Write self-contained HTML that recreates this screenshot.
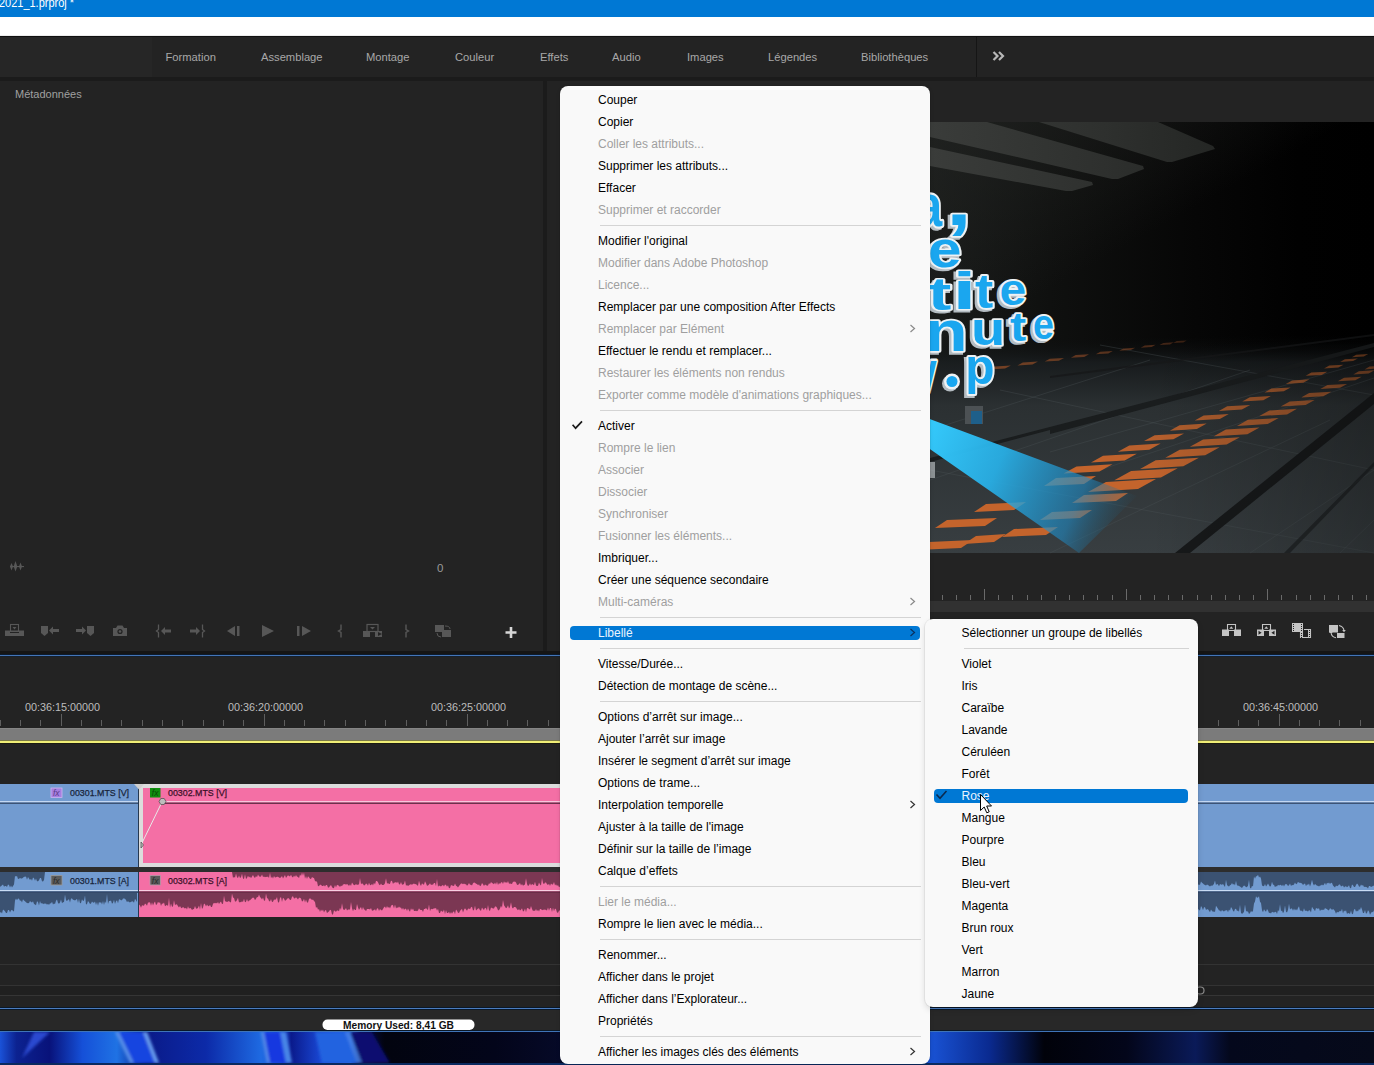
<!DOCTYPE html>
<html><head><meta charset="utf-8"><title>Premiere Pro</title>
<style>
html,body{margin:0;padding:0;}
body{width:1374px;height:1065px;overflow:hidden;position:relative;background:#232323;font-family:'Liberation Sans', sans-serif;}
svg{position:absolute;left:0;top:0;}
svg text{font-family:'Liberation Sans', sans-serif;}
</style></head><body>
<div style="position:absolute;left:0px;top:0px;width:1374px;height:17px;background:#0078d4;"></div>
<div style="position:absolute;left:0px;top:17px;width:1374px;height:19px;background:#ffffff;"></div>
<div style="position:absolute;left:0px;top:35px;width:1374px;height:1px;background:#ececec;"></div>
<div style="position:absolute;left:0px;top:36px;width:1374px;height:1px;background:#101010;"></div>
<div style="position:absolute;left:0px;top:37px;width:1374px;height:40px;background:#232323;"></div>
<div style="position:absolute;left:0px;top:37px;width:152px;height:40px;background:#262626;"></div>
<div style="position:absolute;left:976px;top:37px;width:1px;height:40px;background:#151515;"></div>
<div style="position:absolute;left:0px;top:77px;width:1374px;height:4px;background:#1b1b1b;"></div>
<div style="position:absolute;left:0px;top:81px;width:543px;height:570px;background:#232323;"></div>
<div style="position:absolute;left:543px;top:81px;width:4px;height:570px;background:#1b1b1b;"></div>
<div style="position:absolute;left:547px;top:81px;width:827px;height:570px;background:#232323;"></div>
<div style="position:absolute;left:0px;top:651px;width:1374px;height:3px;background:#151515;"></div>
<div style="position:absolute;left:0px;top:654px;width:1374px;height:1px;background:#0c1a2c;"></div>
<div style="position:absolute;left:0px;top:655px;width:1374px;height:1px;background:#4375b8;"></div>
<div style="position:absolute;left:0px;top:656px;width:1374px;height:1px;background:#16202c;"></div>
<div style="position:absolute;left:0px;top:657px;width:1374px;height:352px;background:#232323;"></div>
<div style="position:absolute;left:0px;top:1007px;width:1374px;height:1px;background:#0a1828;"></div>
<div style="position:absolute;left:0px;top:1008px;width:1374px;height:1px;background:#4a7cc0;"></div>
<div style="position:absolute;left:0px;top:1009px;width:1374px;height:1px;background:#0a1828;"></div>
<div style="position:absolute;left:0px;top:1010px;width:1374px;height:20px;background:#282828;"></div>
<div style="position:absolute;left:0px;top:1030px;width:1374px;height:1px;background:#0a1828;"></div>
<div style="position:absolute;left:0px;top:1031px;width:1374px;height:1px;background:#3f74b8;"></div>
<svg width="1374" height="33" viewBox="0 1032 1374 33" style="position:absolute;left:0;top:1032px">
<defs>
<linearGradient id="wpbase" x1="0" y1="0" x2="1374" y2="0" gradientUnits="userSpaceOnUse">
<stop offset="0" stop-color="#1a52d8"/><stop offset="0.012" stop-color="#0c2290"/><stop offset="0.036" stop-color="#08127a"/>
<stop offset="0.06" stop-color="#1550d8"/><stop offset="0.085" stop-color="#1f72e4"/>
<stop offset="0.106" stop-color="#0a1a88"/><stop offset="0.15" stop-color="#0c2aa8"/><stop offset="0.19" stop-color="#1e6ae2"/>
<stop offset="0.205" stop-color="#1a50d8"/><stop offset="0.212" stop-color="#0a1a8c"/><stop offset="0.235" stop-color="#1a4ad8"/>
<stop offset="0.255" stop-color="#2262e0"/><stop offset="0.262" stop-color="#060c50"/><stop offset="0.28" stop-color="#02040f"/>
<stop offset="0.36" stop-color="#03051a"/><stop offset="0.41" stop-color="#060a28"/><stop offset="0.68" stop-color="#1850d0"/><stop offset="0.72" stop-color="#0a2a90"/>
<stop offset="0.76" stop-color="#01020a"/><stop offset="0.82" stop-color="#03061a"/><stop offset="0.87" stop-color="#0a1a58"/>
<stop offset="0.895" stop-color="#04081c"/><stop offset="1" stop-color="#060a1a"/>
</linearGradient><filter id="wpblur" x="-5%" y="-50%" width="110%" height="200%"><feGaussianBlur stdDeviation="1.6"/></filter></defs>
<rect x="0" y="1032" width="1374" height="33" fill="url(#wpbase)"/>
<g filter="url(#wpblur)">
<polygon points="34,1032 50,1032 22,1058" fill="#2a4ad0"/>
<polygon points="115,1032 119,1032 134,1063 130,1063" fill="#5a92ea"/>
<polygon points="119,1032 143,1032 155,1063 134,1063" fill="#1444e0"/>
<polygon points="143,1032 147,1032 159,1063 155,1063" fill="#6aa0f0"/>
<polygon points="261,1032 264,1032 270,1063 267,1063" fill="#5a8ee8"/>
<polygon points="264,1032 286,1032 290,1063 270,1063" fill="#1238e0"/>
<polygon points="280,1032 286,1032 292,1063 286,1063" fill="#4a86e6"/>
<polygon points="315,1032 345,1032 357,1063 322,1063" fill="#2464e0"/>
<polygon points="345,1032 350,1032 362,1063 357,1063" fill="#4a86e8" opacity="0.8"/>
<polygon points="350,1032 372,1032 390,1063 362,1063" fill="#071070"/>
</g>
<rect x="0" y="1063" width="1374" height="2" fill="#0a2a60"/>
</svg>
<svg width="1374" height="1065" viewBox="0 0 1374 1065" style="position:absolute;left:0;top:0">
<defs>
<linearGradient id="bgwall" x1="930" y1="0" x2="1374" y2="0" gradientUnits="userSpaceOnUse">
  <stop offset="0" stop-color="#191b1a"/><stop offset="0.27" stop-color="#0f100f"/><stop offset="0.6" stop-color="#060606"/><stop offset="0.83" stop-color="#010101"/><stop offset="1" stop-color="#000"/>
</linearGradient>
<linearGradient id="panelg" x1="930" y1="0" x2="1220" y2="0" gradientUnits="userSpaceOnUse">
  <stop offset="0" stop-color="#3a3c3a"/><stop offset="0.6" stop-color="#2e302e"/><stop offset="1" stop-color="#242624"/>
</linearGradient>
<linearGradient id="floorg" x1="0" y1="336" x2="0" y2="553" gradientUnits="userSpaceOnUse">
  <stop offset="0" stop-color="#0a0c0c" stop-opacity="0"/><stop offset="0.12" stop-color="#1a1e20" stop-opacity="0.85"/><stop offset="0.32" stop-color="#2b3032"/><stop offset="1" stop-color="#383e41"/>
</linearGradient>
<linearGradient id="beamg" x1="930" y1="430" x2="1130" y2="520" gradientUnits="userSpaceOnUse">
  <stop offset="0" stop-color="#34c8fa" stop-opacity="1"/><stop offset="0.35" stop-color="#28b2ea" stop-opacity="0.92"/><stop offset="0.75" stop-color="#208ac4" stop-opacity="0.6"/><stop offset="1" stop-color="#1a5c7c" stop-opacity="0"/>
</linearGradient>
<linearGradient id="horizon" x1="0" y1="330" x2="0" y2="368" gradientUnits="userSpaceOnUse">
  <stop offset="0" stop-color="#000" stop-opacity="0.9"/><stop offset="1" stop-color="#000" stop-opacity="0"/>
</linearGradient>
<linearGradient id="ceilglow" x1="930" y1="122" x2="1030" y2="300" gradientUnits="userSpaceOnUse">
  <stop offset="0" stop-color="#222422" stop-opacity="0.7"/><stop offset="1" stop-color="#222422" stop-opacity="0"/>
</linearGradient>
<linearGradient id="rightdark" x1="1150" y1="0" x2="1374" y2="0" gradientUnits="userSpaceOnUse">
  <stop offset="0" stop-color="#000" stop-opacity="0"/><stop offset="1" stop-color="#000" stop-opacity="0.25"/>
</linearGradient>
</defs>
<rect x="700" y="122" width="674" height="431" fill="url(#bgwall)"/>
<rect x="700" y="122" width="674" height="215" fill="url(#ceilglow)"/>
<polygon points="1039,122 1158,122 1213,146 1215,149 1172,162 1167,162" fill="url(#panelg)"/>
<polygon points="800,122 987,122 1143,166 1144,169 1118,179 1112,179 930,137 800,108" fill="url(#panelg)"/>
<polygon points="800,118 930,147 1092,182 1093,185 1072,191 1066,191 930,166 800,140" fill="url(#panelg)"/>
<polygon points="700,336 1374,336 1374,553 700,553" fill="url(#floorg)"/>
<line x1="1374" y1="360" x2="1050" y2="452" stroke="#4b5356" stroke-width="1" opacity="0.35"/>
<line x1="1374" y1="378" x2="1100" y2="470" stroke="#4b5356" stroke-width="1" opacity="0.35"/>
<line x1="1330" y1="420" x2="1050" y2="553" stroke="#4b5356" stroke-width="1" opacity="0.35"/>
<line x1="1374" y1="470" x2="1250" y2="553" stroke="#4b5356" stroke-width="1" opacity="0.35"/>
<line x1="1100" y1="345" x2="1374" y2="395" stroke="#4b5356" stroke-width="1" opacity="0.35"/>
<line x1="1000" y1="390" x2="1374" y2="470" stroke="#4b5356" stroke-width="1" opacity="0.35"/>
<line x1="930" y1="470" x2="1374" y2="553" stroke="#4b5356" stroke-width="1" opacity="0.35"/>
<line x1="1150" y1="360" x2="930" y2="430" stroke="#4b5356" stroke-width="1" opacity="0.35"/>
<line x1="1250" y1="370" x2="930" y2="480" stroke="#4b5356" stroke-width="1" opacity="0.35"/>
<line x1="1374" y1="520" x2="1340" y2="553" stroke="#4b5356" stroke-width="1" opacity="0.35"/>
<polygon points="1374,393 1374,404 1190,553 1175,553" fill="#17191a"/>
<polygon points="1374,343 1374,347 1050,434 1050,430 930,462 930,458" fill="#1a1d1e"/>
<polygon points="1374,334 1374,336 1050,378 1050,376" fill="#161819" opacity="0.8"/>
<polygon points="1374,462 1374,466 1290,553 1284,553" fill="#1b1e20" opacity="0.7"/>
<polygon points="1356.2,354.8 1368.2,354.1 1363.8,356.5 1351.8,357.2" fill="#c4642c" opacity="0.55"/>
<polygon points="1344.8,359.3 1357.8,358.5 1353.1,361.1 1340.2,361.9" fill="#c4642c" opacity="0.58"/>
<polygon points="1329.2,365.6 1343.5,364.7 1338.4,367.6 1324.1,368.4" fill="#c4642c" opacity="0.62"/>
<polygon points="1311.4,372.6 1327.3,371.7 1321.6,374.9 1305.7,375.8" fill="#c4642c" opacity="0.65"/>
<polygon points="1292.1,380.4 1309.6,379.3 1303.3,382.8 1285.8,383.9" fill="#c4642c" opacity="0.69"/>
<polygon points="1271.4,388.6 1290.7,387.4 1283.8,391.3 1264.5,392.5" fill="#c4642c" opacity="0.72"/>
<polygon points="1249.8,397.3 1270.9,396.0 1263.3,400.2 1242.2,401.5" fill="#c4642c" opacity="0.76"/>
<polygon points="1227.2,406.3 1250.2,404.9 1241.9,409.5 1218.9,410.9" fill="#c4642c" opacity="0.79"/>
<polygon points="1203.7,415.6 1228.8,414.1 1219.8,419.1 1194.7,420.6" fill="#c4642c" opacity="0.83"/>
<polygon points="1179.5,425.3 1206.7,423.6 1196.9,429.1 1169.8,430.7" fill="#c4642c" opacity="0.86"/>
<polygon points="1154.7,435.2 1184.0,433.4 1173.4,439.3 1144.1,441.1" fill="#c4642c" opacity="0.90"/>
<polygon points="1129.2,445.4 1160.7,443.5 1149.3,449.8 1117.9,451.7" fill="#c4642c" opacity="0.93"/>
<polygon points="1103.1,455.8 1136.8,453.8 1124.7,460.5 1091.0,462.5" fill="#c4642c" opacity="0.97"/>
<polygon points="1076.5,466.4 1112.5,464.2 1099.5,471.4 1063.5,473.6" fill="#c4642c" opacity="1.00"/>
<polygon points="1369.5,366.6 1383.5,365.8 1378.5,368.6 1364.5,369.4" fill="#c4642c" opacity="0.55"/>
<polygon points="1358.8,371.3 1374.3,370.3 1368.7,373.4 1353.3,374.4" fill="#c4642c" opacity="0.58"/>
<polygon points="1344.1,377.7 1361.6,376.7 1355.3,380.2 1337.8,381.2" fill="#c4642c" opacity="0.62"/>
<polygon points="1327.4,385.1 1347.1,383.9 1340.0,387.8 1320.3,389.0" fill="#c4642c" opacity="0.65"/>
<polygon points="1309.1,393.0 1331.4,391.7 1323.4,396.2 1301.1,397.5" fill="#c4642c" opacity="0.69"/>
<polygon points="1289.7,401.6 1314.6,400.1 1305.6,405.0 1280.7,406.5" fill="#c4642c" opacity="0.72"/>
<polygon points="1269.3,410.5 1297.0,408.8 1287.0,414.4 1259.3,416.0" fill="#c4642c" opacity="0.76"/>
<polygon points="1248.0,419.8 1278.6,418.0 1267.6,424.1 1237.0,426.0" fill="#c4642c" opacity="0.79"/>
<polygon points="1225.9,429.5 1259.5,427.5 1247.4,434.2 1213.8,436.2" fill="#c4642c" opacity="0.83"/>
<polygon points="1203.1,439.5 1239.8,437.3 1226.6,444.6 1189.9,446.8" fill="#c4642c" opacity="0.86"/>
<polygon points="1179.7,449.7 1219.6,447.3 1205.2,455.3 1165.3,457.7" fill="#c4642c" opacity="0.90"/>
<polygon points="1155.7,460.3 1198.9,457.7 1183.3,466.3 1140.1,468.9" fill="#c4642c" opacity="0.93"/>
<polygon points="1131.1,471.0 1177.7,468.2 1160.9,477.5 1114.3,480.3" fill="#c4642c" opacity="0.97"/>
<polygon points="1106.0,482.0 1156.0,479.0 1138.0,489.0 1088.0,492.0" fill="#c4642c" opacity="1.00"/>
<polygon points="1056.0,478.0 1096.0,476.0 1084.0,484.0 1044.0,486.0" fill="#c4642c"/>
<polygon points="1084.0,495.0 1128.0,493.0 1116.0,501.0 1072.0,503.0" fill="#c4642c"/>
<polygon points="1052.0,512.0 1092.0,510.0 1080.0,518.0 1040.0,520.0" fill="#c4642c"/>
<polygon points="947.0,520.0 997.0,518.0 985.0,526.0 935.0,528.0" fill="#c4642c"/>
<polygon points="929.0,542.0 973.0,540.0 961.0,548.0 917.0,550.0" fill="#c4642c"/>
<polygon points="986.0,504.0 1026.0,502.0 1014.0,510.0 974.0,512.0" fill="#c4642c"/>
<polygon points="1014.0,529.0 1058.0,527.0 1046.0,535.0 1002.0,537.0" fill="#c4642c"/>
<polygon points="976.0,536.0 1006.0,534.0 994.0,542.0 964.0,544.0" fill="#c4642c"/>
<polygon points="1176.8,341.0 1186.8,340.4 1183.2,342.4 1173.2,343.0" fill="#9a5028" opacity="0.35"/>
<polygon points="1163.3,342.9 1173.7,342.3 1170.0,344.4 1159.5,345.0" fill="#9a5028" opacity="0.39"/>
<polygon points="1144.6,345.5 1155.7,344.8 1151.7,347.0 1140.7,347.7" fill="#9a5028" opacity="0.44"/>
<polygon points="1123.4,348.5 1135.2,347.7 1130.9,350.1 1119.2,350.8" fill="#9a5028" opacity="0.48"/>
<polygon points="1100.3,351.7 1112.8,350.9 1108.3,353.4 1095.8,354.2" fill="#9a5028" opacity="0.52"/>
<polygon points="1075.7,355.1 1089.0,354.3 1084.2,357.0 1070.9,357.8" fill="#9a5028" opacity="0.57"/>
<polygon points="1049.8,358.7 1064.0,357.9 1058.9,360.7 1044.7,361.6" fill="#9a5028" opacity="0.61"/>
<polygon points="1022.8,362.5 1037.9,361.6 1032.5,364.6 1017.4,365.5" fill="#9a5028" opacity="0.66"/>
<polygon points="994.9,366.4 1010.9,365.4 1005.1,368.6 989.1,369.6" fill="#9a5028" opacity="0.70"/>

<rect x="1150" y="330" width="224" height="223" fill="url(#rightdark)"/>
<polygon points="838,385 1137,496 1079,553" fill="url(#beamg)"/>
<rect x="965" y="406" width="18" height="18" fill="#4c5154"/><rect x="971" y="411" width="11" height="13" fill="#1e5f8a"/>
<rect x="930" y="462" width="5" height="16" fill="#c8cdd0" opacity="0.6"/>
<g transform="translate(913.58,228.40) scale(0.4717,0.6000)"><text x="0" y="0" font-size="100" font-weight="bold" fill="#b4bcc2" stroke="#b4bcc2" stroke-width="7.46" font-family="Liberation Sans">a</text></g>
<g transform="translate(916.08,226.40) scale(0.4717,0.6000)"><text x="0" y="0" font-size="100" font-weight="bold" fill="#1aa6ef" stroke="#eef2f4" stroke-width="7.46" paint-order="stroke" stroke-linejoin="round" font-family="Liberation Sans">a</text></g>
<g transform="translate(943.50,226.50) scale(0.9286,0.7000)"><text x="0" y="0" font-size="100" font-weight="bold" fill="#b4bcc2" stroke="#b4bcc2" stroke-width="4.91" font-family="Liberation Sans">,</text></g>
<g transform="translate(946.00,224.50) scale(0.9286,0.7000)"><text x="0" y="0" font-size="100" font-weight="bold" fill="#1aa6ef" stroke="#eef2f4" stroke-width="4.91" paint-order="stroke" stroke-linejoin="round" font-family="Liberation Sans">,</text></g>
<g transform="translate(925.58,269.49) scale(0.6042,0.5091)"><text x="0" y="0" font-size="100" font-weight="bold" fill="#b4bcc2" stroke="#b4bcc2" stroke-width="7.19" font-family="Liberation Sans">e</text></g>
<g transform="translate(928.08,267.49) scale(0.6042,0.5091)"><text x="0" y="0" font-size="100" font-weight="bold" fill="#1aa6ef" stroke="#eef2f4" stroke-width="7.19" paint-order="stroke" stroke-linejoin="round" font-family="Liberation Sans">e</text></g>
<g transform="translate(925.29,311.53) scale(0.7097,0.4697)"><text x="0" y="0" font-size="100" font-weight="bold" fill="#b4bcc2" stroke="#b4bcc2" stroke-width="6.78" font-family="Liberation Sans">t</text></g>
<g transform="translate(927.79,309.53) scale(0.7097,0.4697)"><text x="0" y="0" font-size="100" font-weight="bold" fill="#1aa6ef" stroke="#eef2f4" stroke-width="6.78" paint-order="stroke" stroke-linejoin="round" font-family="Liberation Sans">t</text></g>
<g transform="translate(950.00,311.00) scale(0.8571,0.5139)"><text x="0" y="0" font-size="100" font-weight="bold" fill="#b4bcc2" stroke="#b4bcc2" stroke-width="5.84" font-family="Liberation Sans">i</text></g>
<g transform="translate(952.50,309.00) scale(0.8571,0.5139)"><text x="0" y="0" font-size="100" font-weight="bold" fill="#1aa6ef" stroke="#eef2f4" stroke-width="5.84" paint-order="stroke" stroke-linejoin="round" font-family="Liberation Sans">i</text></g>
<g transform="translate(972.45,309.52) scale(0.5484,0.4848)"><text x="0" y="0" font-size="100" font-weight="bold" fill="#b4bcc2" stroke="#b4bcc2" stroke-width="7.74" font-family="Liberation Sans">t</text></g>
<g transform="translate(974.95,307.52) scale(0.5484,0.4848)"><text x="0" y="0" font-size="100" font-weight="bold" fill="#1aa6ef" stroke="#eef2f4" stroke-width="7.74" paint-order="stroke" stroke-linejoin="round" font-family="Liberation Sans">t</text></g>
<g transform="translate(997.08,306.56) scale(0.4792,0.4364)"><text x="0" y="0" font-size="100" font-weight="bold" fill="#b4bcc2" stroke="#b4bcc2" stroke-width="8.74" font-family="Liberation Sans">e</text></g>
<g transform="translate(999.58,304.56) scale(0.4792,0.4364)"><text x="0" y="0" font-size="100" font-weight="bold" fill="#1aa6ef" stroke="#eef2f4" stroke-width="8.74" paint-order="stroke" stroke-linejoin="round" font-family="Liberation Sans">e</text></g>
<g transform="translate(922.04,353.00) scale(0.7083,0.5741)"><text x="0" y="0" font-size="100" font-weight="bold" fill="#b4bcc2" stroke="#b4bcc2" stroke-width="6.24" font-family="Liberation Sans">n</text></g>
<g transform="translate(924.54,351.00) scale(0.7083,0.5741)"><text x="0" y="0" font-size="100" font-weight="bold" fill="#1aa6ef" stroke="#eef2f4" stroke-width="6.24" paint-order="stroke" stroke-linejoin="round" font-family="Liberation Sans">n</text></g>
<g transform="translate(968.62,346.54) scale(0.5625,0.4630)"><text x="0" y="0" font-size="100" font-weight="bold" fill="#b4bcc2" stroke="#b4bcc2" stroke-width="7.80" font-family="Liberation Sans">u</text></g>
<g transform="translate(971.12,344.54) scale(0.5625,0.4630)"><text x="0" y="0" font-size="100" font-weight="bold" fill="#1aa6ef" stroke="#eef2f4" stroke-width="7.80" paint-order="stroke" stroke-linejoin="round" font-family="Liberation Sans">u</text></g>
<g transform="translate(1007.52,342.59) scale(0.4839,0.4091)"><text x="0" y="0" font-size="100" font-weight="bold" fill="#b4bcc2" stroke="#b4bcc2" stroke-width="8.96" font-family="Liberation Sans">t</text></g>
<g transform="translate(1010.02,340.59) scale(0.4839,0.4091)"><text x="0" y="0" font-size="100" font-weight="bold" fill="#1aa6ef" stroke="#eef2f4" stroke-width="8.96" paint-order="stroke" stroke-linejoin="round" font-family="Liberation Sans">t</text></g>
<g transform="translate(1030.50,340.58) scale(0.3750,0.4182)"><text x="0" y="0" font-size="100" font-weight="bold" fill="#b4bcc2" stroke="#b4bcc2" stroke-width="10.09" font-family="Liberation Sans">e</text></g>
<g transform="translate(1033.00,338.58) scale(0.3750,0.4182)"><text x="0" y="0" font-size="100" font-weight="bold" fill="#1aa6ef" stroke="#eef2f4" stroke-width="10.09" paint-order="stroke" stroke-linejoin="round" font-family="Liberation Sans">e</text></g>
<g transform="translate(912.61,394.00) scale(0.3889,0.5849)"><text x="0" y="0" font-size="100" font-weight="bold" fill="#b4bcc2" stroke="#b4bcc2" stroke-width="8.22" font-family="Liberation Sans">v</text></g>
<g transform="translate(915.11,392.00) scale(0.3889,0.5849)"><text x="0" y="0" font-size="100" font-weight="bold" fill="#1aa6ef" stroke="#eef2f4" stroke-width="8.22" paint-order="stroke" stroke-linejoin="round" font-family="Liberation Sans">v</text></g>
<circle cx="950" cy="383.5" r="8" fill="#b4bcc2"/><circle cx="952" cy="381.5" r="8" fill="#eef2f4"/><circle cx="952" cy="381.5" r="5.5" fill="#1aa6ef"/>
<g transform="translate(962.64,385.64) scale(0.4800,0.4933)"><text x="0" y="0" font-size="100" font-weight="bold" fill="#b4bcc2" stroke="#b4bcc2" stroke-width="8.22" font-family="Liberation Sans">p</text></g>
<g transform="translate(965.14,383.64) scale(0.4800,0.4933)"><text x="0" y="0" font-size="100" font-weight="bold" fill="#1aa6ef" stroke="#eef2f4" stroke-width="8.22" paint-order="stroke" stroke-linejoin="round" font-family="Liberation Sans">p</text></g>
</svg>
<svg width="1374" height="1065" viewBox="0 0 1374 1065">
<text x="-1" y="6.5" font-size="12" fill="#ffffff" font-weight="normal" textLength="75" lengthAdjust="spacingAndGlyphs">2021_1.prproj *</text>
<text x="165.5" y="61" font-size="11.2" fill="#a8a8a8" font-weight="normal" >Formation</text>
<text x="261" y="61" font-size="11.2" fill="#a8a8a8" font-weight="normal" >Assemblage</text>
<text x="366" y="61" font-size="11.2" fill="#a8a8a8" font-weight="normal" >Montage</text>
<text x="455" y="61" font-size="11.2" fill="#a8a8a8" font-weight="normal" >Couleur</text>
<text x="540" y="61" font-size="11.2" fill="#a8a8a8" font-weight="normal" >Effets</text>
<text x="612" y="61" font-size="11.2" fill="#a8a8a8" font-weight="normal" >Audio</text>
<text x="687" y="61" font-size="11.2" fill="#a8a8a8" font-weight="normal" >Images</text>
<text x="768" y="61" font-size="11.2" fill="#a8a8a8" font-weight="normal" >Légendes</text>
<text x="861" y="61" font-size="11.2" fill="#a8a8a8" font-weight="normal" >Bibliothèques</text>
<path d="M993.5 52 L997.5 56 L993.5 60 M999 52 L1003 56 L999 60" stroke="#b8b8b8" stroke-width="2.2" fill="none"/>
<text x="15" y="98" font-size="11" fill="#a0a0a0" font-weight="normal" >Métadonnées</text>
<text x="437" y="572" font-size="11.5" fill="#9a9a9a" font-weight="normal" >0</text>
<g fill="#575757"><rect x="10" y="566" width="14" height="1.1"/><polygon points="11.5,563 13,566.5 11.5,570.5 10,566.5"/><polygon points="15.5,561 17.3,566.5 15.5,571.5 13.7,566.5"/><polygon points="20.5,562.5 22,566.5 20.5,570.5 19,566.5"/></g>
<g fill="#575757"><rect x="5" y="630.5" width="19" height="5.5"/><rect x="10.5" y="624.5" width="8" height="7" fill="none" stroke="#575757" stroke-width="1.1"/><polygon points="12.5,627 16.5,627 14.5,629.5"/><rect x="10" y="632" width="9" height="1" fill="#232323"/></g>
<g fill="#575757"><path d="M41 626 H48 V633 L44.5 636 L41 633 Z"/><path d="M49 630.5 L53 626.5 V629 H59 V632 H53 V634.5 Z"/></g>
<g fill="#575757"><path d="M76 629 H82 V626.5 L86 630.5 L82 634.5 V632 H76 Z"/><path d="M87 626 H94 V633 L90.5 636 L87 633 Z"/></g>
<g fill="#575757"><path d="M113 628 H116 L117.5 625.5 H122.5 L124 628 H127 V636 H113 Z"/><circle cx="120" cy="631.5" r="2.6" fill="#232323"/><circle cx="120" cy="631.5" r="1.3" fill="#575757"/></g>
<g fill="#575757"><path d="M158.5 624.5 V629.5 L156.5 631 L158.5 632.5 V637.5" stroke="#575757" stroke-width="1.3" fill="none"/><path d="M161 631 L165 627 V629.5 H171 V632.5 H165 V635 Z"/></g>
<g fill="#575757"><path d="M190 629.5 H196 V627 L200 631 L196 635 V632.5 H190 Z"/><path d="M202.5 624.5 V629.5 L204.5 631 L202.5 632.5 V637.5" stroke="#575757" stroke-width="1.3" fill="none"/></g>
<g fill="#575757"><polygon points="227,631 235,626 235,636"/><rect x="237" y="626" width="2.5" height="10"/></g>
<g fill="#575757"><polygon points="262,625 274,631 262,637"/></g>
<g fill="#575757"><rect x="297" y="626" width="2.5" height="10"/><polygon points="302,626 311,631 302,636"/></g>
<path d="M341 624.5 V629.5 L338.5 631 L341 632.5 V637.5" stroke="#575757" stroke-width="1.4" fill="none"/>
<g fill="#575757"><rect x="363" y="631" width="7" height="6"/><rect x="375" y="631" width="7" height="6"/><rect x="367" y="624.5" width="11" height="7" fill="none" stroke="#575757" stroke-width="1.2"/><polygon points="370,627 375,627 372.5,629.5"/><polygon points="378,632 382,634 378,636" fill="#232323"/></g>
<path d="M406 624.5 V629.5 L408.5 631 L406 632.5 V637.5" stroke="#575757" stroke-width="1.4" fill="none"/>
<g fill="#575757"><rect x="435" y="625" width="9" height="7"/><rect x="442" y="630" width="9" height="7"/><path d="M445 626 Q450 626 450 629 M437 633 Q437 637 441 637" stroke="#575757" stroke-width="1" fill="none"/></g>
<path d="M511 627 V638 M505.5 632.5 H516.5" stroke="#d6d6d6" stroke-width="2.6"/>
<rect x="573" y="595" width="1" height="5" fill="#6a6a6a"/>
<rect x="588" y="595" width="1" height="5" fill="#6a6a6a"/>
<rect x="602" y="595" width="1" height="5" fill="#6a6a6a"/>
<rect x="616" y="595" width="1" height="5" fill="#6a6a6a"/>
<rect x="630" y="595" width="1" height="5" fill="#6a6a6a"/>
<rect x="644" y="595" width="1" height="5" fill="#6a6a6a"/>
<rect x="658" y="595" width="1" height="5" fill="#6a6a6a"/>
<rect x="673" y="595" width="1" height="5" fill="#6a6a6a"/>
<rect x="687" y="595" width="1" height="5" fill="#6a6a6a"/>
<rect x="701" y="589" width="1" height="11" fill="#6a6a6a"/>
<rect x="715" y="595" width="1" height="5" fill="#6a6a6a"/>
<rect x="729" y="595" width="1" height="5" fill="#6a6a6a"/>
<rect x="743" y="595" width="1" height="5" fill="#6a6a6a"/>
<rect x="758" y="595" width="1" height="5" fill="#6a6a6a"/>
<rect x="772" y="595" width="1" height="5" fill="#6a6a6a"/>
<rect x="786" y="595" width="1" height="5" fill="#6a6a6a"/>
<rect x="800" y="595" width="1" height="5" fill="#6a6a6a"/>
<rect x="814" y="595" width="1" height="5" fill="#6a6a6a"/>
<rect x="828" y="595" width="1" height="5" fill="#6a6a6a"/>
<rect x="843" y="589" width="1" height="11" fill="#6a6a6a"/>
<rect x="857" y="595" width="1" height="5" fill="#6a6a6a"/>
<rect x="871" y="595" width="1" height="5" fill="#6a6a6a"/>
<rect x="885" y="595" width="1" height="5" fill="#6a6a6a"/>
<rect x="899" y="595" width="1" height="5" fill="#6a6a6a"/>
<rect x="913" y="595" width="1" height="5" fill="#6a6a6a"/>
<rect x="927" y="595" width="1" height="5" fill="#6a6a6a"/>
<rect x="942" y="595" width="1" height="5" fill="#6a6a6a"/>
<rect x="956" y="595" width="1" height="5" fill="#6a6a6a"/>
<rect x="970" y="595" width="1" height="5" fill="#6a6a6a"/>
<rect x="984" y="589" width="1" height="11" fill="#6a6a6a"/>
<rect x="998" y="595" width="1" height="5" fill="#6a6a6a"/>
<rect x="1012" y="595" width="1" height="5" fill="#6a6a6a"/>
<rect x="1027" y="595" width="1" height="5" fill="#6a6a6a"/>
<rect x="1041" y="595" width="1" height="5" fill="#6a6a6a"/>
<rect x="1055" y="595" width="1" height="5" fill="#6a6a6a"/>
<rect x="1069" y="595" width="1" height="5" fill="#6a6a6a"/>
<rect x="1083" y="595" width="1" height="5" fill="#6a6a6a"/>
<rect x="1097" y="595" width="1" height="5" fill="#6a6a6a"/>
<rect x="1112" y="595" width="1" height="5" fill="#6a6a6a"/>
<rect x="1126" y="589" width="1" height="11" fill="#6a6a6a"/>
<rect x="1140" y="595" width="1" height="5" fill="#6a6a6a"/>
<rect x="1154" y="595" width="1" height="5" fill="#6a6a6a"/>
<rect x="1168" y="595" width="1" height="5" fill="#6a6a6a"/>
<rect x="1182" y="595" width="1" height="5" fill="#6a6a6a"/>
<rect x="1197" y="595" width="1" height="5" fill="#6a6a6a"/>
<rect x="1211" y="595" width="1" height="5" fill="#6a6a6a"/>
<rect x="1225" y="595" width="1" height="5" fill="#6a6a6a"/>
<rect x="1239" y="595" width="1" height="5" fill="#6a6a6a"/>
<rect x="1253" y="595" width="1" height="5" fill="#6a6a6a"/>
<rect x="1267" y="589" width="1" height="11" fill="#6a6a6a"/>
<rect x="1281" y="595" width="1" height="5" fill="#6a6a6a"/>
<rect x="1296" y="595" width="1" height="5" fill="#6a6a6a"/>
<rect x="1310" y="595" width="1" height="5" fill="#6a6a6a"/>
<rect x="1324" y="595" width="1" height="5" fill="#6a6a6a"/>
<rect x="1338" y="595" width="1" height="5" fill="#6a6a6a"/>
<rect x="1352" y="595" width="1" height="5" fill="#6a6a6a"/>
<rect x="1366" y="595" width="1" height="5" fill="#6a6a6a"/>
<rect x="600" y="601" width="774" height="11" fill="#313131"/>
<g fill="#c4c4c4"><rect x="1222" y="629.5" width="7" height="6.5"/><rect x="1234" y="629.5" width="7" height="6.5"/><path d="M1227.5 630.5 V624.5 H1235.5 V630.5 Z" fill="none" stroke="#c4c4c4" stroke-width="1.1"/><polygon points="1229.3,628.8 1233.3,628.8 1231.3,626.2"/></g>
<g fill="#c4c4c4"><rect x="1257" y="629.5" width="7" height="6.5"/><rect x="1269" y="629.5" width="7" height="6.5"/><path d="M1262.5 630.5 V624.5 H1270.5 V630.5 Z" fill="none" stroke="#c4c4c4" stroke-width="1.1"/><polygon points="1264.3,628.8 1268.3,628.8 1266.3,626.2"/><polygon points="1258.5,630.8 1261.6,632.8 1258.5,634.8" fill="#232323"/><polygon points="1274.5,630.8 1271.4,632.8 1274.5,634.8" fill="#232323"/></g>
<g fill="#c4c4c4"><rect x="1292" y="623" width="11" height="9"/><rect x="1293" y="624" width="1" height="1" fill="#232323"/><rect x="1301" y="624" width="1" height="1" fill="#232323"/><rect x="1293" y="626" width="1" height="1" fill="#232323"/><rect x="1301" y="626" width="1" height="1" fill="#232323"/><rect x="1293" y="628" width="1" height="1" fill="#232323"/><rect x="1301" y="628" width="1" height="1" fill="#232323"/><rect x="1293" y="630" width="1" height="1" fill="#232323"/><rect x="1301" y="630" width="1" height="1" fill="#232323"/><path d="M1304 629.5 H1310.5 V637.5 H1300.5 V632.5" fill="none" stroke="#c4c4c4" stroke-width="1.1"/><rect x="1300" y="632" width="3" height="6"/><rect x="1308" y="629" width="3" height="9"/><rect x="1301" y="633" width="1" height="1" fill="#232323"/><rect x="1301" y="635" width="1" height="1" fill="#232323"/><rect x="1301" y="637" width="1" height="1" fill="#232323"/><rect x="1309" y="630" width="1" height="1" fill="#232323"/><rect x="1309" y="632" width="1" height="1" fill="#232323"/><rect x="1309" y="634" width="1" height="1" fill="#232323"/><rect x="1309" y="636" width="1" height="1" fill="#232323"/></g>
<g fill="#c4c4c4"><rect x="1329" y="625" width="9" height="7.5"/><rect x="1337" y="633" width="7.5" height="5"/><path d="M1339 625.5 Q1343.5 626.5 1344 630.5" fill="none" stroke="#c4c4c4" stroke-width="1.1"/><polygon points="1342.2,630 1345.8,630 1344,632.2"/><path d="M1336 637.8 Q1331.5 637 1331 632.5" fill="none" stroke="#c4c4c4" stroke-width="1.1"/><polygon points="1329.2,633 1332.8,633 1331,630.8"/></g>
<text x="62.5" y="711" font-size="10.8" fill="#bdbdbd" text-anchor="middle">00:36:15:00000</text>
<text x="265.5" y="711" font-size="10.8" fill="#bdbdbd" text-anchor="middle">00:36:20:00000</text>
<text x="468.5" y="711" font-size="10.8" fill="#bdbdbd" text-anchor="middle">00:36:25:00000</text>
<text x="671.5" y="711" font-size="10.8" fill="#bdbdbd" text-anchor="middle">00:36:30:00000</text>
<text x="874.5" y="711" font-size="10.8" fill="#bdbdbd" text-anchor="middle">00:36:35:00000</text>
<text x="1077.5" y="711" font-size="10.8" fill="#bdbdbd" text-anchor="middle">00:36:40:00000</text>
<text x="1280.5" y="711" font-size="10.8" fill="#bdbdbd" text-anchor="middle">00:36:45:00000</text>
<rect x="0" y="720" width="1" height="6" fill="#5e5e5e"/>
<rect x="20" y="720" width="1" height="6" fill="#5e5e5e"/>
<rect x="40" y="720" width="1" height="6" fill="#5e5e5e"/>
<rect x="61" y="714" width="1" height="12" fill="#5e5e5e"/>
<rect x="81" y="720" width="1" height="6" fill="#5e5e5e"/>
<rect x="101" y="720" width="1" height="6" fill="#5e5e5e"/>
<rect x="121" y="720" width="1" height="6" fill="#5e5e5e"/>
<rect x="142" y="720" width="1" height="6" fill="#5e5e5e"/>
<rect x="162" y="720" width="1" height="6" fill="#5e5e5e"/>
<rect x="182" y="720" width="1" height="6" fill="#5e5e5e"/>
<rect x="203" y="720" width="1" height="6" fill="#5e5e5e"/>
<rect x="223" y="720" width="1" height="6" fill="#5e5e5e"/>
<rect x="243" y="720" width="1" height="6" fill="#5e5e5e"/>
<rect x="264" y="714" width="1" height="12" fill="#5e5e5e"/>
<rect x="284" y="720" width="1" height="6" fill="#5e5e5e"/>
<rect x="304" y="720" width="1" height="6" fill="#5e5e5e"/>
<rect x="324" y="720" width="1" height="6" fill="#5e5e5e"/>
<rect x="345" y="720" width="1" height="6" fill="#5e5e5e"/>
<rect x="365" y="720" width="1" height="6" fill="#5e5e5e"/>
<rect x="385" y="720" width="1" height="6" fill="#5e5e5e"/>
<rect x="406" y="720" width="1" height="6" fill="#5e5e5e"/>
<rect x="426" y="720" width="1" height="6" fill="#5e5e5e"/>
<rect x="446" y="720" width="1" height="6" fill="#5e5e5e"/>
<rect x="467" y="714" width="1" height="12" fill="#5e5e5e"/>
<rect x="487" y="720" width="1" height="6" fill="#5e5e5e"/>
<rect x="507" y="720" width="1" height="6" fill="#5e5e5e"/>
<rect x="527" y="720" width="1" height="6" fill="#5e5e5e"/>
<rect x="548" y="720" width="1" height="6" fill="#5e5e5e"/>
<rect x="568" y="720" width="1" height="6" fill="#5e5e5e"/>
<rect x="588" y="720" width="1" height="6" fill="#5e5e5e"/>
<rect x="609" y="720" width="1" height="6" fill="#5e5e5e"/>
<rect x="629" y="720" width="1" height="6" fill="#5e5e5e"/>
<rect x="649" y="720" width="1" height="6" fill="#5e5e5e"/>
<rect x="670" y="714" width="1" height="12" fill="#5e5e5e"/>
<rect x="690" y="720" width="1" height="6" fill="#5e5e5e"/>
<rect x="710" y="720" width="1" height="6" fill="#5e5e5e"/>
<rect x="730" y="720" width="1" height="6" fill="#5e5e5e"/>
<rect x="751" y="720" width="1" height="6" fill="#5e5e5e"/>
<rect x="771" y="720" width="1" height="6" fill="#5e5e5e"/>
<rect x="791" y="720" width="1" height="6" fill="#5e5e5e"/>
<rect x="812" y="720" width="1" height="6" fill="#5e5e5e"/>
<rect x="832" y="720" width="1" height="6" fill="#5e5e5e"/>
<rect x="852" y="720" width="1" height="6" fill="#5e5e5e"/>
<rect x="873" y="714" width="1" height="12" fill="#5e5e5e"/>
<rect x="893" y="720" width="1" height="6" fill="#5e5e5e"/>
<rect x="913" y="720" width="1" height="6" fill="#5e5e5e"/>
<rect x="933" y="720" width="1" height="6" fill="#5e5e5e"/>
<rect x="954" y="720" width="1" height="6" fill="#5e5e5e"/>
<rect x="974" y="720" width="1" height="6" fill="#5e5e5e"/>
<rect x="994" y="720" width="1" height="6" fill="#5e5e5e"/>
<rect x="1015" y="720" width="1" height="6" fill="#5e5e5e"/>
<rect x="1035" y="720" width="1" height="6" fill="#5e5e5e"/>
<rect x="1055" y="720" width="1" height="6" fill="#5e5e5e"/>
<rect x="1076" y="714" width="1" height="12" fill="#5e5e5e"/>
<rect x="1096" y="720" width="1" height="6" fill="#5e5e5e"/>
<rect x="1116" y="720" width="1" height="6" fill="#5e5e5e"/>
<rect x="1136" y="720" width="1" height="6" fill="#5e5e5e"/>
<rect x="1157" y="720" width="1" height="6" fill="#5e5e5e"/>
<rect x="1177" y="720" width="1" height="6" fill="#5e5e5e"/>
<rect x="1197" y="720" width="1" height="6" fill="#5e5e5e"/>
<rect x="1218" y="720" width="1" height="6" fill="#5e5e5e"/>
<rect x="1238" y="720" width="1" height="6" fill="#5e5e5e"/>
<rect x="1258" y="720" width="1" height="6" fill="#5e5e5e"/>
<rect x="1279" y="714" width="1" height="12" fill="#5e5e5e"/>
<rect x="1299" y="720" width="1" height="6" fill="#5e5e5e"/>
<rect x="1319" y="720" width="1" height="6" fill="#5e5e5e"/>
<rect x="1339" y="720" width="1" height="6" fill="#5e5e5e"/>
<rect x="1360" y="720" width="1" height="6" fill="#5e5e5e"/>
<rect x="0" y="728" width="1374" height="1" fill="#858585"/><rect x="0" y="729" width="1374" height="11" fill="#7b7b7b"/>
<rect x="0" y="740" width="1374" height="1" fill="#7c7a48"/><rect x="0" y="741" width="1374" height="2" fill="#f0ee76"/><rect x="0" y="743" width="1374" height="1" fill="#1c1c10"/>
<rect x="0" y="784" width="138" height="83" fill="#729bd0"/>
<rect x="138" y="784" width="1" height="83" fill="#263850"/>
<rect x="1198" y="784" width="176" height="83" fill="#729bd0"/>
<rect x="0" y="801" width="138" height="1.5" fill="#c3d7f2"/><rect x="0" y="802.5" width="138" height="1.5" fill="#3b5376"/>
<rect x="1198" y="801" width="176" height="1.5" fill="#c3d7f2"/><rect x="1198" y="802.5" width="176" height="1.5" fill="#3b5376"/>
<rect x="139" y="784" width="430" height="83" fill="#dcdcdc"/>
<rect x="143" y="788" width="426" height="75" fill="#f46fa5"/>
<rect x="162" y="801" width="410" height="1.5" fill="#f8c6dc"/><rect x="162" y="802.5" width="410" height="1.5" fill="#6e2f4c"/>
<polygon points="134,784 144,784 139,789.5" fill="#cfcfcf"/>
<polygon points="134,872 144,872 139,877.5" fill="#cfcfcf"/>
<rect x="51" y="788" width="11" height="9.5" fill="#a77fe0" stroke="#cdb6f0" stroke-width="0.8"/>
<text x="53" y="796" font-size="8.5" font-style="italic" fill="#5a3c8a">fx</text>
<rect x="150" y="788" width="10.5" height="9.5" fill="#0f8f0f"/>
<text x="151.8" y="796" font-size="8.5" font-style="italic" fill="#0a4a0a">fx</text>
<text x="70" y="796" font-size="9.6" fill="#17243a" stroke="#17243a" stroke-width="0.25" textLength="59" lengthAdjust="spacingAndGlyphs">00301.MTS [V]</text>
<text x="168" y="796" font-size="9.6" fill="#3a1028" stroke="#3a1028" stroke-width="0.25" textLength="59" lengthAdjust="spacingAndGlyphs">00302.MTS [V]</text>
<line x1="141" y1="845" x2="162" y2="802" stroke="#e8e8e8" stroke-width="1"/>
<polygon points="159,801.5 160.8,798.5 164.2,798.5 166,801.5 164.2,804.5 160.8,804.5" fill="#bdbdbd" stroke="#4a4a4a" stroke-width="0.7"/>
<polygon points="141,842 143.5,845 141,848" fill="#bdbdbd" stroke="#4a4a4a" stroke-width="0.7"/>
<rect x="0" y="867" width="1374" height="5" fill="#2d2d2d"/>
<rect x="0" y="872" width="138" height="45" fill="#729bd0"/>
<rect x="138" y="872" width="1" height="45" fill="#263850"/>
<rect x="139" y="872" width="430" height="45" fill="#f46fa5"/>
<rect x="1198" y="872" width="176" height="45" fill="#729bd0"/>
<path d="M0 872 L0 886.8 L1 886.3 L2 885.3 L3 884.6 L4 886.8 L5 886.0 L6 885.9 L7 887.1 L8 884.5 L9 885.0 L10 887.4 L11 885.5 L12 887.5 L13 886.0 L14 884.5 L15 876.1 L16 876.5 L17 876.1 L18 879.1 L19 878.8 L20 878.0 L21 878.6 L22 878.4 L23 877.8 L24 876.7 L25 876.7 L26 876.6 L27 879.7 L28 877.0 L29 878.5 L30 879.9 L31 878.7 L32 880.7 L33 877.4 L34 878.2 L35 880.7 L36 878.5 L37 881.2 L38 881.3 L39 880.3 L40 878.0 L41 877.9 L42 881.3 L43 881.4 L44 880.1 L45 872.0 L46 872.0 L47 872.0 L48 872.0 L49 872.0 L50 872.0 L51 872.0 L52 872.0 L53 872.0 L54 872.0 L55 872.0 L56 872.0 L57 872.0 L58 872.0 L59 872.0 L60 872.0 L61 872.0 L62 872.0 L63 872.0 L64 872.0 L65 872.0 L66 872.0 L67 872.0 L68 872.0 L69 872.0 L70 872.0 L71 872.0 L72 872.0 L73 872.0 L74 872.0 L75 872.0 L76 872.0 L77 872.0 L78 872.0 L79 872.0 L80 872.0 L81 872.0 L82 872.0 L83 872.0 L84 872.0 L85 872.0 L86 872.0 L87 872.0 L88 872.0 L89 872.0 L90 872.0 L91 872.0 L92 872.0 L93 872.0 L94 872.0 L95 872.0 L96 872.0 L97 872.0 L98 872.0 L99 872.0 L100 872.0 L101 872.0 L102 872.0 L103 872.0 L104 872.0 L105 872.0 L106 872.0 L107 872.0 L108 872.0 L109 872.0 L110 872.0 L111 872.0 L112 872.0 L113 872.0 L114 872.0 L115 872.0 L116 872.0 L117 872.0 L118 872.0 L119 872.0 L120 872.0 L121 872.0 L122 872.0 L123 872.0 L124 872.0 L125 872.0 L126 872.0 L127 872.0 L128 872.0 L129 872.0 L130 872.0 L131 872.0 L132 872.0 L133 872.0 L134 872.0 L135 872.0 L136 872.0 L137 872.0 L137 872 Z" fill="#3b5272"/>
<path d="M0 893 L0 912.7 L1 912.0 L2 913.6 L3 909.5 L4 910.2 L5 911.3 L6 913.1 L7 912.9 L8 909.9 L9 910.0 L10 912.4 L11 910.4 L12 909.7 L13 911.0 L14 911.5 L15 900.6 L16 898.4 L17 900.3 L18 898.6 L19 898.8 L20 900.7 L21 900.4 L22 902.6 L23 899.2 L24 900.6 L25 901.2 L26 902.3 L27 903.1 L28 903.3 L29 903.1 L30 901.0 L31 902.0 L32 902.5 L33 901.3 L34 904.0 L35 904.4 L36 905.2 L37 901.2 L38 902.0 L39 905.5 L40 901.0 L41 903.7 L42 902.7 L43 904.3 L44 903.6 L45 903.8 L46 903.6 L47 904.7 L48 903.7 L49 904.9 L50 903.2 L51 903.4 L52 901.7 L53 904.6 L54 903.5 L55 903.9 L56 900.7 L57 899.5 L58 902.9 L59 903.7 L60 902.5 L61 899.6 L62 903.3 L63 902.2 L64 902.1 L65 894.6 L66 900.3 L67 901.0 L68 899.8 L69 899.3 L70 902.4 L71 898.6 L72 898.4 L73 899.7 L74 899.9 L75 900.5 L76 899.8 L77 898.8 L78 902.9 L79 898.8 L80 903.3 L81 903.1 L82 899.2 L83 900.9 L84 900.6 L85 895.5 L86 904.4 L87 904.1 L88 901.0 L89 902.3 L90 904.1 L91 903.6 L92 901.6 L93 902.6 L94 902.7 L95 901.4 L96 905.0 L97 902.0 L98 905.7 L99 901.7 L100 903.1 L101 901.9 L102 904.5 L103 900.9 L104 905.0 L105 901.2 L106 903.2 L107 894.1 L108 904.1 L109 900.9 L110 900.9 L111 900.4 L112 903.7 L113 902.7 L114 899.8 L115 904.0 L116 901.2 L117 900.2 L118 903.2 L119 899.3 L120 899.6 L121 900.2 L122 900.2 L123 898.6 L124 898.6 L125 898.7 L126 899.9 L127 902.2 L128 901.1 L129 902.2 L130 902.2 L131 902.1 L132 901.3 L133 901.4 L134 902.8 L135 898.8 L136 900.3 L137 902.0 L137 893 Z" fill="#3b5272"/>
<path d="M139 872 L139 872.0 L140 872.0 L141 872.0 L142 872.0 L143 872.0 L144 872.0 L145 872.0 L146 872.0 L147 872.0 L148 872.0 L149 872.0 L150 872.0 L151 872.0 L152 872.0 L153 872.0 L154 872.0 L155 872.0 L156 872.0 L157 872.0 L158 872.0 L159 872.0 L160 872.0 L161 872.0 L162 872.0 L163 872.0 L164 872.0 L165 872.0 L166 872.0 L167 872.0 L168 872.0 L169 872.0 L170 872.0 L171 872.0 L172 872.0 L173 872.0 L174 872.0 L175 872.0 L176 872.0 L177 872.0 L178 872.0 L179 872.0 L180 872.0 L181 872.0 L182 872.0 L183 872.0 L184 872.0 L185 872.0 L186 872.0 L187 872.0 L188 872.0 L189 872.0 L190 872.0 L191 872.0 L192 872.0 L193 872.0 L194 872.0 L195 872.0 L196 872.0 L197 872.0 L198 872.0 L199 872.0 L200 872.0 L201 872.0 L202 872.0 L203 872.0 L204 872.0 L205 872.0 L206 872.0 L207 872.0 L208 872.0 L209 872.0 L210 872.0 L211 872.0 L212 872.0 L213 872.0 L214 872.0 L215 872.0 L216 872.0 L217 872.0 L218 872.0 L219 872.0 L220 872.0 L221 872.0 L222 872.0 L223 872.0 L224 872.0 L225 872.0 L226 872.0 L227 872.0 L228 872.0 L229 872.0 L230 872.0 L231 872.0 L232 872.0 L233 878.1 L234 876.8 L235 877.8 L236 873.5 L237 877.2 L238 877.9 L239 875.6 L240 878.0 L241 877.3 L242 873.7 L243 878.6 L244 879.1 L245 874.3 L246 879.1 L247 878.1 L248 875.8 L249 877.6 L250 876.6 L251 878.2 L252 876.5 L253 874.9 L254 876.9 L255 878.1 L256 875.9 L257 877.3 L258 874.6 L259 876.2 L260 876.7 L261 876.5 L262 874.6 L263 877.1 L264 876.4 L265 877.2 L266 876.7 L267 876.9 L268 876.6 L269 877.9 L270 872.8 L271 878.3 L272 876.6 L273 878.5 L274 876.0 L275 877.4 L276 877.2 L277 876.8 L278 876.7 L279 877.4 L280 878.1 L281 877.3 L282 876.1 L283 878.5 L284 876.8 L285 875.1 L286 878.1 L287 876.4 L288 875.3 L289 876.1 L290 876.4 L291 874.7 L292 876.7 L293 877.6 L294 875.5 L295 877.1 L296 875.0 L297 876.7 L298 876.8 L299 878.2 L300 874.6 L301 876.1 L302 872.4 L303 875.8 L304 872.4 L305 878.7 L306 876.1 L307 879.1 L308 876.2 L309 877.2 L310 878.7 L311 879.0 L312 876.9 L313 877.8 L314 878.0 L315 880.9 L316 881.5 L317 881.6 L318 886.2 L319 886.0 L320 884.8 L321 884.8 L322 885.9 L323 886.1 L324 885.3 L325 886.5 L326 884.9 L327 885.1 L328 887.5 L329 887.6 L330 885.9 L331 885.0 L332 887.1 L333 888.2 L334 888.1 L335 884.9 L336 887.5 L337 884.7 L338 885.2 L339 885.8 L340 887.1 L341 885.5 L342 886.2 L343 884.4 L344 884.3 L345 884.0 L346 884.7 L347 884.0 L348 884.8 L349 886.1 L350 884.3 L351 885.9 L352 882.6 L353 884.1 L354 885.2 L355 885.0 L356 884.1 L357 884.9 L358 884.5 L359 884.5 L360 878.0 L361 884.3 L362 883.2 L363 884.0 L364 885.4 L365 884.9 L366 883.4 L367 883.9 L368 885.8 L369 882.7 L370 885.1 L371 885.2 L372 883.7 L373 885.4 L374 882.8 L375 884.6 L376 881.1 L377 881.0 L378 882.3 L379 884.4 L380 885.3 L381 883.6 L382 885.0 L383 884.9 L384 884.7 L385 883.3 L386 878.3 L387 883.8 L388 882.9 L389 883.9 L390 883.8 L391 880.8 L392 881.0 L393 884.0 L394 882.4 L395 882.8 L396 881.7 L397 883.3 L398 881.6 L399 884.3 L400 884.5 L401 882.1 L402 884.8 L403 884.5 L404 884.1 L405 880.5 L406 885.8 L407 885.1 L408 886.0 L409 885.3 L410 884.6 L411 884.3 L412 884.7 L413 883.9 L414 883.4 L415 884.3 L416 883.9 L417 885.2 L418 885.8 L419 880.8 L420 884.3 L421 886.0 L422 883.3 L423 884.2 L424 884.7 L425 881.3 L426 883.2 L427 885.8 L428 885.5 L429 884.5 L430 883.2 L431 885.0 L432 884.5 L433 884.7 L434 883.0 L435 883.0 L436 886.2 L437 879.1 L438 886.8 L439 885.4 L440 885.9 L441 886.4 L442 885.6 L443 885.1 L444 886.6 L445 884.5 L446 885.1 L447 886.8 L448 885.3 L449 888.2 L450 888.0 L451 885.1 L452 885.4 L453 885.8 L454 885.9 L455 883.5 L456 885.8 L457 886.3 L458 887.5 L459 886.0 L460 884.7 L461 883.5 L462 883.5 L463 884.2 L464 883.6 L465 884.2 L466 884.3 L467 885.8 L468 884.7 L469 883.1 L470 884.7 L471 884.8 L472 885.5 L473 883.3 L474 882.6 L475 882.8 L476 883.7 L477 884.1 L478 885.2 L479 884.2 L480 886.2 L481 885.6 L482 883.1 L483 884.2 L484 886.1 L485 884.5 L486 885.1 L487 885.7 L488 885.5 L489 883.2 L490 884.1 L491 881.9 L492 883.1 L493 883.4 L494 884.3 L495 882.4 L496 884.5 L497 881.8 L498 885.0 L499 882.9 L500 884.1 L501 882.5 L502 882.0 L503 884.1 L504 881.2 L505 883.0 L506 881.8 L507 883.2 L508 881.0 L509 883.7 L510 883.6 L511 883.7 L512 883.9 L513 881.8 L514 881.7 L515 881.4 L516 882.6 L517 884.7 L518 885.0 L519 884.1 L520 883.1 L521 885.5 L522 884.0 L523 885.7 L524 884.9 L525 884.5 L526 878.2 L527 883.9 L528 886.1 L529 885.3 L530 883.2 L531 885.5 L532 884.0 L533 884.4 L534 885.2 L535 881.8 L536 885.4 L537 885.9 L538 885.7 L539 882.4 L540 884.5 L541 885.5 L542 878.1 L543 882.9 L544 884.2 L545 882.6 L546 882.4 L547 884.3 L548 885.0 L549 883.7 L550 886.1 L551 883.6 L552 884.4 L553 884.4 L554 882.0 L555 885.6 L556 884.3 L557 886.1 L558 884.9 L559 887.3 L560 886.5 L561 884.5 L562 886.7 L563 886.6 L564 885.9 L565 887.8 L566 888.1 L567 885.1 L568 882.4 L569 884.8 L569 872 Z" fill="#7b3753"/>
<path d="M139 893 L139 904.4 L140 905.6 L141 907.8 L142 905.3 L143 905.6 L144 905.8 L145 903.5 L146 904.2 L147 905.7 L148 902.6 L149 902.5 L150 902.2 L151 905.7 L152 902.2 L153 905.6 L154 902.9 L155 901.4 L156 905.0 L157 904.3 L158 901.7 L159 903.0 L160 902.3 L161 906.1 L162 903.5 L163 903.7 L164 902.4 L165 906.2 L166 905.5 L167 904.8 L168 906.3 L169 897.7 L170 907.7 L171 903.6 L172 906.7 L173 906.5 L174 900.3 L175 905.3 L176 904.3 L177 904.6 L178 906.2 L179 907.5 L180 906.0 L181 907.7 L182 908.2 L183 906.7 L184 908.1 L185 908.6 L186 907.8 L187 909.4 L188 906.3 L189 908.8 L190 907.8 L191 908.5 L192 910.0 L193 909.2 L194 909.1 L195 905.9 L196 908.6 L197 908.8 L198 907.8 L199 905.5 L200 909.8 L201 902.9 L202 908.9 L203 907.5 L204 903.4 L205 904.3 L206 906.6 L207 904.5 L208 906.0 L209 906.3 L210 904.8 L211 906.9 L212 906.9 L213 904.1 L214 902.7 L215 903.5 L216 902.7 L217 903.5 L218 902.0 L219 904.1 L220 902.4 L221 901.6 L222 903.9 L223 903.8 L224 895.8 L225 901.3 L226 901.5 L227 901.9 L228 901.4 L229 901.0 L230 902.3 L231 902.3 L232 893.5 L233 897.6 L234 898.1 L235 901.4 L236 901.4 L237 900.0 L238 897.7 L239 902.5 L240 902.1 L241 902.2 L242 901.2 L243 902.0 L244 898.7 L245 902.2 L246 901.8 L247 899.0 L248 901.7 L249 900.6 L250 900.3 L251 899.3 L252 898.3 L253 897.6 L254 898.1 L255 900.3 L256 898.7 L257 897.1 L258 897.3 L259 894.4 L260 896.9 L261 898.0 L262 899.5 L263 897.5 L264 900.4 L265 900.8 L266 893.5 L267 898.3 L268 898.6 L269 901.0 L270 901.6 L271 899.0 L272 901.9 L273 901.8 L274 899.5 L275 899.7 L276 899.3 L277 897.0 L278 902.3 L279 902.6 L280 898.0 L281 897.1 L282 902.0 L283 897.8 L284 898.7 L285 900.7 L286 900.3 L287 899.1 L288 898.1 L289 898.4 L290 900.0 L291 899.8 L292 896.8 L293 896.3 L294 898.5 L295 898.3 L296 897.2 L297 898.2 L298 899.5 L299 897.7 L300 897.8 L301 898.4 L302 901.5 L303 901.0 L304 898.7 L305 902.6 L306 899.4 L307 902.6 L308 902.4 L309 898.9 L310 898.2 L311 898.9 L312 900.1 L313 899.5 L314 901.1 L315 902.0 L316 908.1 L317 906.8 L318 909.8 L319 909.1 L320 912.1 L321 909.5 L322 911.2 L323 909.6 L324 912.4 L325 910.4 L326 910.1 L327 913.3 L328 911.9 L329 911.5 L330 909.7 L331 910.2 L332 914.6 L333 914.6 L334 910.2 L335 911.3 L336 911.7 L337 910.6 L338 910.5 L339 911.2 L340 907.8 L341 910.0 L342 903.3 L343 908.9 L344 910.0 L345 909.6 L346 908.0 L347 910.4 L348 909.6 L349 909.4 L350 909.6 L351 901.9 L352 908.2 L353 911.2 L354 908.8 L355 910.1 L356 910.0 L357 904.1 L358 907.6 L359 909.9 L360 908.2 L361 906.9 L362 910.3 L363 906.9 L364 909.6 L365 909.8 L366 911.2 L367 908.9 L368 908.9 L369 908.9 L370 909.6 L371 908.0 L372 910.7 L373 910.5 L374 910.1 L375 909.2 L376 910.9 L377 908.5 L378 908.2 L379 910.9 L380 908.9 L381 910.0 L382 910.6 L383 908.9 L384 907.3 L385 906.5 L386 908.4 L387 906.1 L388 907.9 L389 906.8 L390 908.5 L391 906.1 L392 904.8 L393 905.3 L394 908.6 L395 904.6 L396 908.5 L397 907.2 L398 908.1 L399 906.6 L400 907.8 L401 907.4 L402 909.8 L403 907.7 L404 910.1 L405 908.7 L406 908.8 L407 910.9 L408 908.5 L409 910.4 L410 911.8 L411 908.2 L412 910.3 L413 908.4 L414 911.0 L415 911.0 L416 910.8 L417 911.2 L418 910.4 L419 908.3 L420 909.7 L421 910.1 L422 910.1 L423 912.1 L424 909.1 L425 908.9 L426 907.9 L427 909.3 L428 910.0 L429 904.5 L430 911.2 L431 908.7 L432 909.3 L433 909.1 L434 908.3 L435 908.6 L436 908.0 L437 910.7 L438 908.8 L439 913.1 L440 913.1 L441 910.5 L442 911.5 L443 911.8 L444 909.4 L445 914.2 L446 909.9 L447 912.9 L448 913.0 L449 911.7 L450 913.9 L451 912.1 L452 913.8 L453 912.1 L454 911.3 L455 914.3 L456 909.4 L457 910.8 L458 912.8 L459 913.1 L460 911.0 L461 909.8 L462 909.1 L463 912.5 L464 909.7 L465 908.3 L466 909.5 L467 910.7 L468 908.8 L469 908.6 L470 909.3 L471 907.2 L472 906.8 L473 910.4 L474 910.0 L475 905.8 L476 910.6 L477 909.5 L478 908.6 L479 908.3 L480 910.2 L481 910.7 L482 907.5 L483 909.1 L484 909.9 L485 907.8 L486 908.3 L487 910.8 L488 905.0 L489 910.5 L490 910.7 L491 907.6 L492 908.1 L493 908.6 L494 908.4 L495 906.5 L496 906.6 L497 907.8 L498 910.2 L499 910.2 L500 908.5 L501 905.7 L502 907.8 L503 900.0 L504 905.2 L505 906.7 L506 908.3 L507 907.4 L508 905.3 L509 908.5 L510 907.0 L511 902.2 L512 907.5 L513 908.4 L514 907.0 L515 906.9 L516 907.5 L517 909.2 L518 910.2 L519 908.9 L520 910.6 L521 909.8 L522 908.3 L523 911.4 L524 911.0 L525 908.6 L526 912.2 L527 908.2 L528 908.1 L529 909.0 L530 909.5 L531 906.1 L532 909.1 L533 911.1 L534 910.4 L535 910.9 L536 908.9 L537 911.3 L538 909.8 L539 911.4 L540 908.9 L541 908.9 L542 910.2 L543 909.8 L544 909.7 L545 909.5 L546 910.0 L547 910.6 L548 907.5 L549 910.7 L550 908.0 L551 908.1 L552 912.1 L553 907.7 L554 911.2 L555 908.4 L556 909.3 L557 912.6 L558 912.8 L559 910.8 L560 910.3 L561 912.7 L562 910.5 L563 910.4 L564 911.9 L565 914.6 L566 910.4 L567 912.5 L568 911.0 L569 911.2 L569 893 Z" fill="#7b3753"/>
<path d="M1198 872 L1198 884.6 L1199 884.8 L1200 884.8 L1201 881.4 L1202 882.7 L1203 883.4 L1204 884.5 L1205 885.0 L1206 885.6 L1207 884.5 L1208 884.9 L1209 885.7 L1210 886.6 L1211 885.5 L1212 885.7 L1213 885.2 L1214 883.7 L1215 880.6 L1216 885.3 L1217 883.7 L1218 884.5 L1219 886.2 L1220 884.1 L1221 884.5 L1222 884.8 L1223 884.0 L1224 885.6 L1225 886.9 L1226 879.7 L1227 885.1 L1228 885.9 L1229 886.4 L1230 885.3 L1231 884.8 L1232 882.9 L1233 884.7 L1234 883.8 L1235 885.6 L1236 880.7 L1237 885.6 L1238 885.6 L1239 886.0 L1240 886.4 L1241 887.2 L1242 888.0 L1243 886.5 L1244 885.5 L1245 885.9 L1246 887.3 L1247 887.1 L1248 885.8 L1249 879.8 L1250 887.8 L1251 888.4 L1252 885.8 L1253 886.5 L1254 876.6 L1255 878.7 L1256 876.2 L1257 876.3 L1258 874.8 L1259 877.5 L1260 876.4 L1261 878.4 L1262 885.6 L1263 886.0 L1264 886.3 L1265 884.1 L1266 886.6 L1267 885.2 L1268 883.5 L1269 885.3 L1270 886.7 L1271 885.8 L1272 881.8 L1273 884.8 L1274 884.7 L1275 887.2 L1276 886.0 L1277 886.6 L1278 884.8 L1279 885.6 L1280 884.9 L1281 884.7 L1282 886.3 L1283 884.5 L1284 886.5 L1285 884.5 L1286 884.1 L1287 884.4 L1288 886.0 L1289 885.2 L1290 883.5 L1291 885.9 L1292 884.9 L1293 885.2 L1294 884.4 L1295 882.4 L1296 884.2 L1297 883.7 L1298 881.8 L1299 882.7 L1300 882.7 L1301 882.9 L1302 883.4 L1303 885.1 L1304 884.0 L1305 883.5 L1306 886.3 L1307 884.3 L1308 885.1 L1309 883.5 L1310 886.4 L1311 883.7 L1312 879.8 L1313 883.7 L1314 885.5 L1315 883.9 L1316 884.7 L1317 885.8 L1318 885.7 L1319 886.5 L1320 885.5 L1321 885.5 L1322 884.6 L1323 885.5 L1324 884.6 L1325 882.8 L1326 885.3 L1327 882.8 L1328 883.5 L1329 882.5 L1330 884.1 L1331 882.7 L1332 883.1 L1333 885.6 L1334 886.6 L1335 887.4 L1336 885.6 L1337 886.3 L1338 885.7 L1339 884.5 L1340 884.4 L1341 886.6 L1342 886.1 L1343 885.6 L1344 887.6 L1345 886.4 L1346 886.3 L1347 887.2 L1348 886.4 L1349 885.3 L1350 887.9 L1351 888.2 L1352 884.6 L1353 885.2 L1354 886.9 L1355 886.9 L1356 884.9 L1357 883.4 L1358 884.5 L1359 886.4 L1360 886.7 L1361 884.6 L1362 885.8 L1363 885.0 L1364 887.0 L1365 886.7 L1366 887.0 L1367 887.2 L1368 888.4 L1369 885.9 L1370 885.9 L1371 887.1 L1372 886.4 L1373 886.0 L1374 885.5 L1374 872 Z" fill="#3b5272"/>
<path d="M1198 893 L1198 908.7 L1199 910.0 L1200 910.4 L1201 906.0 L1202 907.6 L1203 910.2 L1204 907.2 L1205 907.3 L1206 910.0 L1207 909.2 L1208 909.2 L1209 910.7 L1210 912.3 L1211 909.6 L1212 910.9 L1213 911.7 L1214 911.6 L1215 912.1 L1216 905.7 L1217 907.2 L1218 908.8 L1219 910.4 L1220 910.5 L1221 911.7 L1222 910.1 L1223 911.1 L1224 911.6 L1225 910.6 L1226 910.6 L1227 910.0 L1228 912.3 L1229 909.4 L1230 910.7 L1231 907.1 L1232 908.4 L1233 910.7 L1234 911.7 L1235 908.9 L1236 908.7 L1237 911.1 L1238 910.4 L1239 911.7 L1240 904.7 L1241 913.1 L1242 913.7 L1243 913.2 L1244 911.8 L1245 904.6 L1246 911.0 L1247 911.5 L1248 911.4 L1249 913.9 L1250 913.1 L1251 910.9 L1252 911.9 L1253 911.0 L1254 903.6 L1255 901.5 L1256 896.2 L1257 897.7 L1258 897.6 L1259 896.3 L1260 901.7 L1261 903.1 L1262 910.2 L1263 912.3 L1264 909.2 L1265 910.7 L1266 911.7 L1267 909.0 L1268 910.5 L1269 913.0 L1270 912.7 L1271 913.5 L1272 911.8 L1273 912.3 L1274 912.5 L1275 912.0 L1276 911.7 L1277 914.1 L1278 909.9 L1279 911.6 L1280 904.2 L1281 911.3 L1282 910.4 L1283 913.3 L1284 911.5 L1285 905.5 L1286 911.8 L1287 912.4 L1288 909.9 L1289 903.7 L1290 909.5 L1291 908.4 L1292 908.6 L1293 910.8 L1294 908.6 L1295 910.6 L1296 909.0 L1297 910.6 L1298 907.9 L1299 906.2 L1300 910.7 L1301 910.4 L1302 911.0 L1303 911.8 L1304 908.2 L1305 910.9 L1306 910.4 L1307 910.9 L1308 911.5 L1309 910.2 L1310 910.6 L1311 912.6 L1312 906.8 L1313 908.6 L1314 909.4 L1315 911.3 L1316 908.1 L1317 908.5 L1318 908.7 L1319 908.3 L1320 911.2 L1321 909.4 L1322 910.2 L1323 909.6 L1324 909.9 L1325 908.1 L1326 908.8 L1327 909.0 L1328 910.2 L1329 910.3 L1330 908.3 L1331 908.8 L1332 910.1 L1333 909.1 L1334 909.7 L1335 911.2 L1336 913.8 L1337 911.7 L1338 912.5 L1339 911.7 L1340 910.8 L1341 911.6 L1342 908.7 L1343 913.6 L1344 910.5 L1345 911.4 L1346 910.3 L1347 914.0 L1348 913.0 L1349 913.2 L1350 913.9 L1351 910.6 L1352 914.3 L1353 913.8 L1354 909.4 L1355 908.9 L1356 911.7 L1357 910.6 L1358 911.6 L1359 909.1 L1360 909.9 L1361 906.9 L1362 909.4 L1363 913.0 L1364 912.9 L1365 910.0 L1366 913.8 L1367 913.0 L1368 910.2 L1369 911.5 L1370 914.7 L1371 913.0 L1372 911.8 L1373 912.2 L1374 910.2 L1374 893 Z" fill="#3b5272"/>
<rect x="0" y="890" width="138" height="1.3" fill="#c9dcf4"/><rect x="0" y="891.3" width="138" height="1.7" fill="#34496a"/>
<rect x="139" y="890" width="430" height="1.3" fill="#f9d0e2"/><rect x="139" y="891.3" width="430" height="1.7" fill="#6b2d48"/>
<rect x="1198" y="890" width="176" height="1.3" fill="#c9dcf4"/><rect x="1198" y="891.3" width="176" height="1.7" fill="#34496a"/>
<rect x="51" y="875.5" width="11" height="9.5" fill="#5b5b5b" stroke="#9a9a9a" stroke-width="0.8"/>
<text x="53" y="883.5" font-size="8.5" font-style="italic" fill="#2a2a2a">fx</text>
<rect x="150" y="875.5" width="10.5" height="9.5" fill="#5b5b5b" stroke="#b99aa8" stroke-width="0.8"/>
<text x="151.8" y="883.5" font-size="8.5" font-style="italic" fill="#2a2a2a">fx</text>
<text x="70" y="884" font-size="9.6" fill="#17243a" stroke="#17243a" stroke-width="0.25" textLength="59" lengthAdjust="spacingAndGlyphs">00301.MTS [A]</text>
<text x="168" y="884" font-size="9.6" fill="#3a1028" stroke="#3a1028" stroke-width="0.25" textLength="59" lengthAdjust="spacingAndGlyphs">00302.MTS [A]</text>
<rect x="0" y="964" width="1374" height="1" fill="#333333"/>
<rect x="0" y="985" width="1374" height="1" fill="#333333"/>
<rect x="0" y="986" width="1374" height="9" fill="#202020"/>
<rect x="0" y="995" width="1374" height="1" fill="#353535"/>
<rect x="1196" y="987" width="8" height="7" rx="3.5" fill="none" stroke="#8a8a8a" stroke-width="1.2"/>
<rect x="322.5" y="1019.5" width="152" height="10.5" rx="5" fill="#ffffff"/>
<text x="343" y="1028.6" font-size="10.2" font-weight="bold" fill="#111">Memory Used: 8,41 GB</text>
</svg>
<div style="position:absolute;left:560px;top:86px;width:370px;height:978px;background:#f9f9f9;border-radius:8px;box-shadow:0 0 0 1px rgba(0,0,0,0.05),0 1px 4px rgba(0,0,0,0.10);"></div>
<div style="position:absolute;left:925px;top:619px;width:273px;height:388px;background:#f9f9f9;border-radius:8px;box-shadow:0 0 0 1px rgba(0,0,0,0.05),0 3px 6px rgba(0,0,0,0.12);"></div>
<svg width="1374" height="1065" viewBox="0 0 1374 1065" style="position:absolute;left:0;top:0"><text x="598" y="104" font-size="12" fill="#000000">Couper</text>
<text x="598" y="126" font-size="12" fill="#000000">Copier</text>
<text x="598" y="148" font-size="12" fill="#9f9f9f">Coller les attributs...</text>
<text x="598" y="170" font-size="12" fill="#000000">Supprimer les attributs...</text>
<text x="598" y="192" font-size="12" fill="#000000">Effacer</text>
<text x="598" y="214" font-size="12" fill="#9f9f9f">Supprimer et raccorder</text>
<rect x="600" y="225" width="321" height="1" fill="#d4d4d4"/>
<text x="598" y="245" font-size="12" fill="#000000">Modifier l'original</text>
<text x="598" y="267" font-size="12" fill="#9f9f9f">Modifier dans Adobe Photoshop</text>
<text x="598" y="289" font-size="12" fill="#9f9f9f">Licence...</text>
<text x="598" y="311" font-size="12" fill="#000000">Remplacer par une composition After Effects</text>
<text x="598" y="333" font-size="12" fill="#9f9f9f">Remplacer par Elément</text>
<path d="M910.5 325.0 L914.5 328.5 L910.5 332.0" stroke="#8a8a8a" stroke-width="1.2" fill="none"/>
<text x="598" y="355" font-size="12" fill="#000000">Effectuer le rendu et remplacer...</text>
<text x="598" y="377" font-size="12" fill="#9f9f9f">Restaurer les éléments non rendus</text>
<text x="598" y="399" font-size="12" fill="#9f9f9f">Exporter comme modèle d'animations graphiques...</text>
<rect x="600" y="410" width="321" height="1" fill="#d4d4d4"/>
<text x="598" y="430" font-size="12" fill="#000000">Activer</text>
<path d="M572.6 424.8 L575.6 428.2 L582 421.4" stroke="#1a1a1a" stroke-width="1.7" fill="none"/>
<text x="598" y="452" font-size="12" fill="#9f9f9f">Rompre le lien</text>
<text x="598" y="474" font-size="12" fill="#9f9f9f">Associer</text>
<text x="598" y="496" font-size="12" fill="#9f9f9f">Dissocier</text>
<text x="598" y="518" font-size="12" fill="#9f9f9f">Synchroniser</text>
<text x="598" y="540" font-size="12" fill="#9f9f9f">Fusionner les éléments...</text>
<text x="598" y="562" font-size="12" fill="#000000">Imbriquer...</text>
<text x="598" y="584" font-size="12" fill="#000000">Créer une séquence secondaire</text>
<text x="598" y="606" font-size="12" fill="#9f9f9f">Multi-caméras</text>
<path d="M910.5 598.0 L914.5 601.5 L910.5 605.0" stroke="#8a8a8a" stroke-width="1.2" fill="none"/>
<rect x="600" y="617" width="321" height="1" fill="#d4d4d4"/>
<rect x="570" y="626" width="350" height="14" rx="4" fill="#0078d4"/>
<text x="598" y="637" font-size="12" fill="#eaf4ff">Libellé</text>
<path d="M910.5 629.0 L914.5 632.5 L910.5 636.0" stroke="#0a3260" stroke-width="1.2" fill="none"/>
<rect x="600" y="648" width="321" height="1" fill="#d4d4d4"/>
<text x="598" y="668" font-size="12" fill="#000000">Vitesse/Durée...</text>
<text x="598" y="690" font-size="12" fill="#000000">Détection de montage de scène...</text>
<rect x="600" y="701" width="321" height="1" fill="#d4d4d4"/>
<text x="598" y="721" font-size="12" fill="#000000">Options d’arrêt sur image...</text>
<text x="598" y="743" font-size="12" fill="#000000">Ajouter l’arrêt sur image</text>
<text x="598" y="765" font-size="12" fill="#000000">Insérer le segment d’arrêt sur image</text>
<text x="598" y="787" font-size="12" fill="#000000">Options de trame...</text>
<text x="598" y="809" font-size="12" fill="#000000">Interpolation temporelle</text>
<path d="M910.5 801.0 L914.5 804.5 L910.5 808.0" stroke="#333333" stroke-width="1.2" fill="none"/>
<text x="598" y="831" font-size="12" fill="#000000">Ajuster à la taille de l'image</text>
<text x="598" y="853" font-size="12" fill="#000000">Définir sur la taille de l’image</text>
<text x="598" y="875" font-size="12" fill="#000000">Calque d’effets</text>
<rect x="600" y="886" width="321" height="1" fill="#d4d4d4"/>
<text x="598" y="906" font-size="12" fill="#9f9f9f">Lier le média...</text>
<text x="598" y="928" font-size="12" fill="#000000">Rompre le lien avec le média...</text>
<rect x="600" y="939" width="321" height="1" fill="#d4d4d4"/>
<text x="598" y="959" font-size="12" fill="#000000">Renommer...</text>
<text x="598" y="981" font-size="12" fill="#000000">Afficher dans le projet</text>
<text x="598" y="1003" font-size="12" fill="#000000">Afficher dans l’Explorateur...</text>
<text x="598" y="1025" font-size="12" fill="#000000">Propriétés</text>
<rect x="600" y="1036" width="321" height="1" fill="#d4d4d4"/>
<text x="598" y="1056" font-size="12" fill="#000000">Afficher les images clés des éléments</text>
<path d="M910.5 1048.0 L914.5 1051.5 L910.5 1055.0" stroke="#333333" stroke-width="1.2" fill="none"/>
<text x="961.5" y="637" font-size="12" fill="#000000">Sélectionner un groupe de libellés</text>
<rect x="964" y="648" width="225" height="1" fill="#d4d4d4"/>
<text x="961.5" y="668" font-size="12" fill="#000000">Violet</text>
<text x="961.5" y="690" font-size="12" fill="#000000">Iris</text>
<text x="961.5" y="712" font-size="12" fill="#000000">Caraïbe</text>
<text x="961.5" y="734" font-size="12" fill="#000000">Lavande</text>
<text x="961.5" y="756" font-size="12" fill="#000000">Céruléen</text>
<text x="961.5" y="778" font-size="12" fill="#000000">Forêt</text>
<rect x="934" y="789" width="254" height="14" rx="4" fill="#0078d4"/>
<path d="M936.5 794.5 L940 798.2 L946.5 791" stroke="#0a2a50" stroke-width="1.6" fill="none"/>
<text x="961.5" y="800" font-size="12" fill="#eaf4ff">Rose</text>
<text x="961.5" y="822" font-size="12" fill="#000000">Mangue</text>
<text x="961.5" y="844" font-size="12" fill="#000000">Pourpre</text>
<text x="961.5" y="866" font-size="12" fill="#000000">Bleu</text>
<text x="961.5" y="888" font-size="12" fill="#000000">Bleu-vert</text>
<text x="961.5" y="910" font-size="12" fill="#000000">Magenta</text>
<text x="961.5" y="932" font-size="12" fill="#000000">Brun roux</text>
<text x="961.5" y="954" font-size="12" fill="#000000">Vert</text>
<text x="961.5" y="976" font-size="12" fill="#000000">Marron</text>
<text x="961.5" y="998" font-size="12" fill="#000000">Jaune</text>
<path d="M980.5 794.5 L980.5 810.5 L984.2 807 L986.8 812.8 L989.2 811.8 L986.7 806 L991.5 806 Z" fill="#ffffff" stroke="#000" stroke-width="1" stroke-linejoin="round"/></svg>
</body></html>
